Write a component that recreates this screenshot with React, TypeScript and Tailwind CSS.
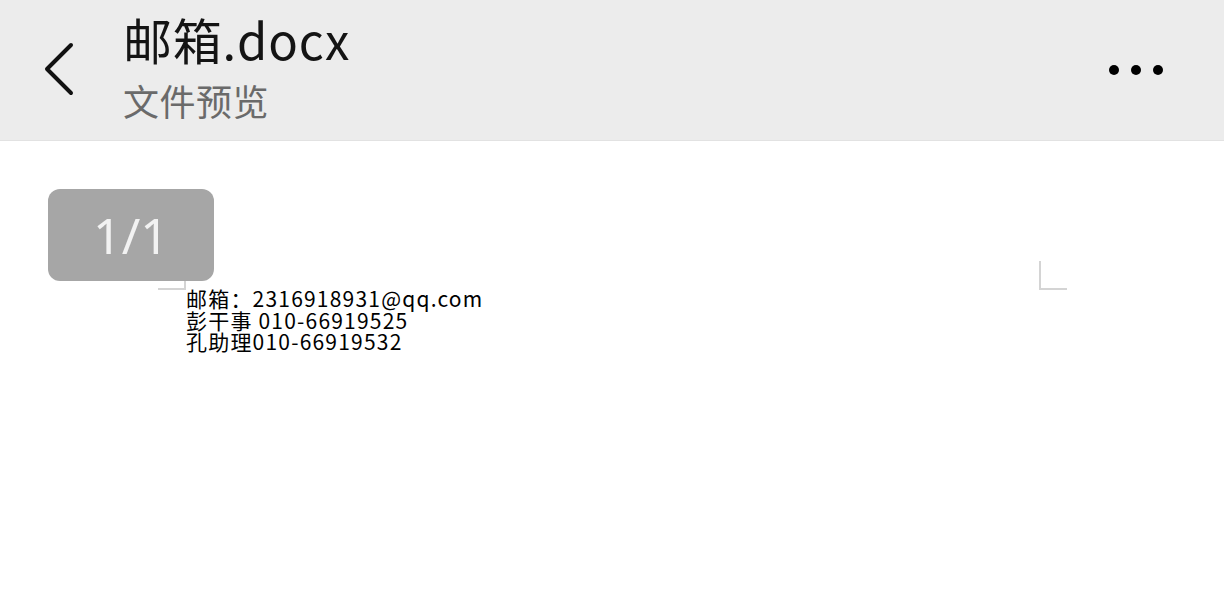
export default function App() {
  return (
    <div className="w-[1224px] h-[594px] bg-white overflow-hidden font-['Noto_Sans_CJK_SC','Noto_Sans',sans-serif]">
      {/* Top bar */}
      <header className="h-[141px] bg-[#ececec] border-b border-[#e2e2e2] flex items-start">
        <button className="w-[123px] h-[141px] flex items-start pt-[42px] pl-[42px]">
          <svg width="34" height="54" viewBox="0 0 34 54" fill="none">
            <path d="M29 3 L5 27 L29 51" stroke="#111" strokeWidth="4" strokeLinecap="round" strokeLinejoin="round" />
          </svg>
        </button>
        <div className="flex flex-col pt-[7px]">
          <h1 className="text-[49px] leading-[64px] text-[#141414] tracking-[0.8px]">邮箱.docx</h1>
          <p className="text-[36px] leading-[44px] text-[#6a6a6a] mt-[7px] tracking-[0.5px]">文件预览</p>
        </div>
        <div className="ml-auto mr-[61px] mt-[65px] flex gap-[12px]">
          <span className="w-[10px] h-[10px] rounded-full bg-black" />
          <span className="w-[10px] h-[10px] rounded-full bg-black" />
          <span className="w-[10px] h-[10px] rounded-full bg-black" />
        </div>
      </header>

      {/* Document preview */}
      <main className="relative">
        <div className="pt-[120px] pl-[158px] pr-[157px] flex justify-between">
          <div className="w-[28px] h-[29px] border-r-2 border-b-2 border-[#d4d4d4]" />
          <div className="w-[28px] h-[29px] border-l-2 border-b-2 border-[#d4d4d4]" />
        </div>
        <div className="pl-[186px] -mt-[2px] text-[21px] leading-[21.5px] tracking-[1.2px] text-black">
          <p>邮箱：2316918931@qq.com</p>
          <p>彭干事 010-66919525</p>
          <p>孔助理010-66919532</p>
        </div>
        <div className="absolute left-[48px] top-[48px] w-[166px] h-[92px] rounded-[12px] bg-[#a6a6a6] flex items-center justify-center">
          <span className="text-[50px] text-[#f2f2f2] font-['Noto_Sans',sans-serif] leading-none">1/1</span>
        </div>
      </main>
    </div>
  )
}
